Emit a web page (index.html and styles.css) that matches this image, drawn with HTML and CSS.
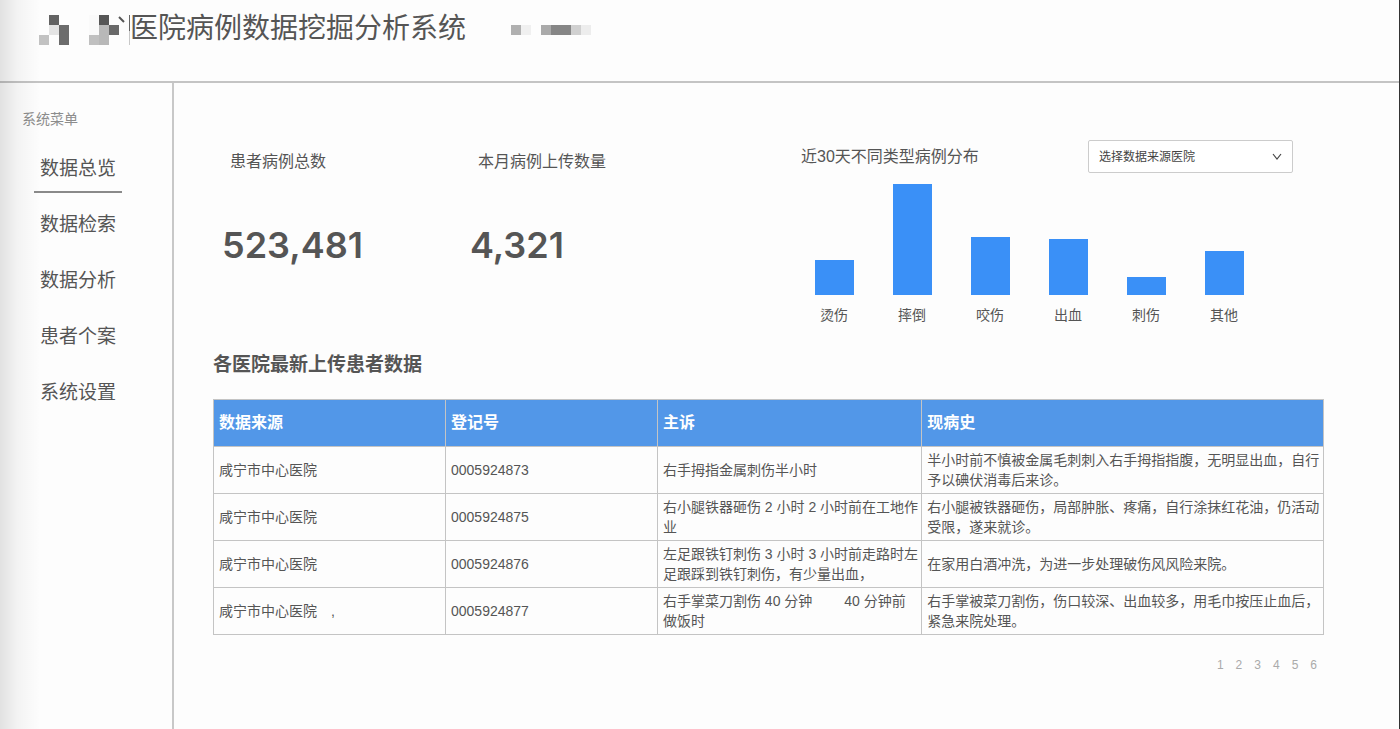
FILE: index.html
```html
<!DOCTYPE html>
<html lang="zh-CN">
<head>
    <meta charset="UTF-8">
    <meta name="viewport" content="width=device-width, initial-scale=1.0">
    <title>医院病例数据挖掘分析系统</title>
    <link rel="stylesheet" href="styles.css">
</head>
<body>

    <header class="header">
        <svg class="logo" width="91" height="30" viewBox="0 0 91 30" shape-rendering="crispEdges" aria-hidden="true">
            <rect x="10" y="0" width="10" height="10" fill="#636363"/>
            <rect x="10" y="10" width="10" height="10" fill="#e4e4e4"/>
            <rect x="20" y="10" width="10" height="20" fill="#6c6c6c"/>
            <rect x="0" y="20" width="10" height="10" fill="#c2c2c2"/>
            <rect x="50" y="0" width="10" height="20" fill="#fafafa"/>
            <rect x="60" y="0" width="10" height="10" fill="#565656"/>
            <rect x="60" y="10" width="10" height="20" fill="#b8b8b8"/>
            <rect x="70" y="10" width="10" height="10" fill="#696969"/>
            <rect x="50" y="20" width="10" height="10" fill="#c0c0c0"/>
            <path d="M80 2l5 5" stroke="#555" stroke-width="2" shape-rendering="auto"/>
            <rect x="90" y="0" width="1" height="16" fill="#666"/>
            <rect x="90" y="16" width="1" height="14" fill="#c8c8c8"/>
        </svg>
        <h1 class="title">医院病例数据挖掘分析系统</h1>
        <svg class="user" width="80" height="10" viewBox="0 0 80 10" shape-rendering="crispEdges" aria-hidden="true">
            <rect x="0" y="0" width="10" height="10" fill="#b0b0b0"/>
            <rect x="10" y="0" width="10" height="10" fill="#f0f0f0"/>
            <rect x="30" y="0" width="10" height="10" fill="#aaaaaa"/>
            <rect x="40" y="0" width="20" height="10" fill="#868686"/>
            <rect x="60" y="0" width="10" height="10" fill="#d0d0d0"/>
            <rect x="70" y="0" width="10" height="10" fill="#ededed"/>
        </svg>
    </header>

    <div class="layout">
        <nav class="sidebar">
            <h2 class="menu-title">系统菜单</h2>
            <a class="menu-item active" href="#">数据总览</a>
            <a class="menu-item" href="#">数据检索</a>
            <a class="menu-item" href="#">数据分析</a>
            <a class="menu-item" href="#">患者个案</a>
            <a class="menu-item" href="#">系统设置</a>
        </nav>

        <main class="main">
            <section class="overview">
                <div class="stat">
                    <div class="stat-label">患者病例总数</div>
                    <div class="stat-value">523,481</div>
                </div>
                <div class="stat">
                    <div class="stat-label">本月病例上传数量</div>
                    <div class="stat-value">4,321</div>
                </div>
                <div class="chart">
                    <div class="chart-head">
                        <h2 class="chart-title">近30天不同类型病例分布</h2>
                        <div class="select-box">
                            <select class="select" aria-label="选择数据来源医院">
                                <option>选择数据来源医院</option>
                                <option>咸宁市中心医院</option>
                            </select>
                            <svg class="arrow" width="10" height="7" viewBox="0 0 10 7" aria-hidden="true">
                                <path d="M1 1l4 5 4-5" fill="none" stroke="#444" stroke-width="1.2"/>
                            </svg>
                        </div>
                    </div>
                    <div class="bars">
                        <div class="bar-col"><div class="bar" style="height: 35px"></div><span>烫伤</span></div>
                        <div class="bar-col"><div class="bar" style="height: 111px"></div><span>摔倒</span></div>
                        <div class="bar-col"><div class="bar" style="height: 58px"></div><span>咬伤</span></div>
                        <div class="bar-col"><div class="bar" style="height: 56px"></div><span>出血</span></div>
                        <div class="bar-col"><div class="bar" style="height: 18px"></div><span>刺伤</span></div>
                        <div class="bar-col"><div class="bar" style="height: 44px"></div><span>其他</span></div>
                    </div>
                </div>
            </section>

            <h2 class="table-title">各医院最新上传患者数据</h2>
            <table class="table">
                <colgroup>
                    <col class="col-source">
                    <col class="col-id">
                    <col class="col-complaint">
                    <col class="col-history">
                </colgroup>
                <thead>
                    <tr>
                        <th>数据来源</th>
                        <th>登记号</th>
                        <th>主诉</th>
                        <th>现病史</th>
                    </tr>
                </thead>
                <tbody>
                    <tr>
                        <td>咸宁市中心医院</td>
                        <td>0005924873</td>
                        <td>右手拇指金属刺伤半小时</td>
                        <td>半小时前不慎被金属毛刺刺入右手拇指指腹，无明显出血，自行予以碘伏消毒后来诊。</td>
                    </tr>
                    <tr>
                        <td>咸宁市中心医院</td>
                        <td>0005924875</td>
                        <td>右小腿铁器砸伤 2 小时 2 小时前在工地作业</td>
                        <td>右小腿被铁器砸伤，局部肿胀、疼痛，自行涂抹红花油，仍活动受限，遂来就诊。</td>
                    </tr>
                    <tr>
                        <td>咸宁市中心医院</td>
                        <td>0005924876</td>
                        <td>左足跟铁钉刺伤 3 小时 3 小时前走路时左足跟踩到铁钉刺伤，有少量出血，</td>
                        <td>在家用白酒冲洗，为进一步处理破伤风风险来院。</td>
                    </tr>
                    <tr>
                        <td>咸宁市中心医院&emsp;,</td>
                        <td>0005924877</td>
                        <td>右手掌菜刀割伤 40 分钟&emsp;&emsp; 40 分钟前做饭时</td>
                        <td>右手掌被菜刀割伤，伤口较深、出血较多，用毛巾按压止血后，紧急来院处理。</td>
                    </tr>
                </tbody>
            </table>

            <nav class="pages" aria-label="分页">
                <a href="#">1</a>
                <a href="#">2</a>
                <a href="#">3</a>
                <a href="#">4</a>
                <a href="#">5</a>
                <a href="#">6</a>
            </nav>
        </main>
    </div>

</body>
</html>
```

FILE: styles.css
```css
* {
    box-sizing: border-box;
}

body {
    display: flex;
    flex-direction: column;
    min-height: 100vh;
    margin: 0;
    background-color: #fdfdfd;
    border-right: 1px solid #333;
    color: #555;
    font-family: "Liberation Sans", "Noto Sans CJK SC", sans-serif;
    font-size: 14px;
}

/* soft shade along the left edge */
body::before {
    content: "";
    position: absolute;
    top: 0;
    bottom: 0;
    left: 0;
    width: 40px;
    background: linear-gradient(to right, rgba(0, 0, 0, 0.11), rgba(0, 0, 0, 0.04) 45%, rgba(0, 0, 0, 0));
    pointer-events: none;
}

h1,
h2 {
    margin: 0;
    font-weight: 400;
}

a {
    color: inherit;
    text-decoration: none;
}

.header {
    display: flex;
    align-items: flex-start;
    padding: 9px 39px 32px;
    border-bottom: 2px solid #c4c4c4;
}

.logo {
    margin-top: 6px;
}

.title {
    font-size: 28px;
    line-height: 40px;
}

.user {
    margin: 16px 0 0 45px;
}

.layout {
    display: flex;
    flex: 1;
}

.sidebar {
    display: flex;
    flex-direction: column;
    align-items: flex-start;
    width: 174px;
    padding: 26px 0 0 34px;
    border-right: 2px solid #c8c8c8;
}

.menu-title {
    margin: 0 0 16px -12px;
    color: #8c8c8c;
    font-size: 14px;
    line-height: 20px;
}

.menu-item {
    margin-bottom: 8px;
    padding: 10px 6px 8px;
    border-bottom: 2px solid transparent;
    font-size: 19px;
    line-height: 28px;
}

.menu-item.active {
    border-bottom-color: #8a8a8a;
}

.main {
    flex: 1;
    padding: 57px 75px 40px 39px;
}

.overview {
    display: grid;
    grid-template-columns: 248fr 325fr 498fr;
    padding: 0 31px 0 9px;
}

.stat-label {
    padding: 10px 8px 0;
    font-size: 16px;
    line-height: 24px;
}

.stat-value {
    margin-top: 46px;
    font-family: Inter, sans-serif;
    font-size: 36px;
    font-weight: 600;
    line-height: 50px;
}

.chart-head {
    display: flex;
    justify-content: space-between;
    align-items: center;
    padding-left: 6px;
}

.chart-title {
    font-size: 16px;
    line-height: 24px;
}

.select-box {
    position: relative;
    width: 205px;
}

.select {
    display: block;
    width: 100%;
    height: 33px;
    padding: 0 10px;
    appearance: none;
    background-color: #fff;
    border: 1px solid #ccc;
    border-radius: 2px;
    color: #444;
    font-family: inherit;
    font-size: 12px;
}

.arrow {
    position: absolute;
    top: 13px;
    right: 11px;
    pointer-events: none;
}

.bars {
    display: flex;
    align-items: flex-end;
    padding-right: 30px;
    margin-top: 11px;
}

.bar-col {
    display: flex;
    flex: 1;
    flex-direction: column;
    align-items: center;
    gap: 10px;
    line-height: 20px;
}

.bar {
    width: 50%;
    background-color: #3a90f7;
}

.table-title {
    margin-top: 26px;
    font-size: 19px;
    font-weight: 700;
    line-height: 28px;
}

.table {
    width: 100%;
    margin-top: 20px;
    border-collapse: collapse;
    table-layout: fixed;
    line-height: 20px;
}

.col-source {
    width: 20.9%;
}

.col-id {
    width: 19.1%;
}

.col-complaint {
    width: 23.8%;
}

.col-history {
    width: 36.2%;
}

.table th,
.table td {
    height: 47px;
    padding: 2px 2px 2px 5px;
    border: 1px solid #c4c4c4;
    text-align: left;
}

.table th {
    background-color: #5297e8;
    color: #fff;
    font-size: 16px;
    font-weight: 700;
}

.pages {
    display: flex;
    justify-content: flex-end;
    gap: 12px;
    margin-top: 20px;
    padding-right: 7px;
    color: #aaa;
    font-size: 12px;
    line-height: 20px;
}
```
